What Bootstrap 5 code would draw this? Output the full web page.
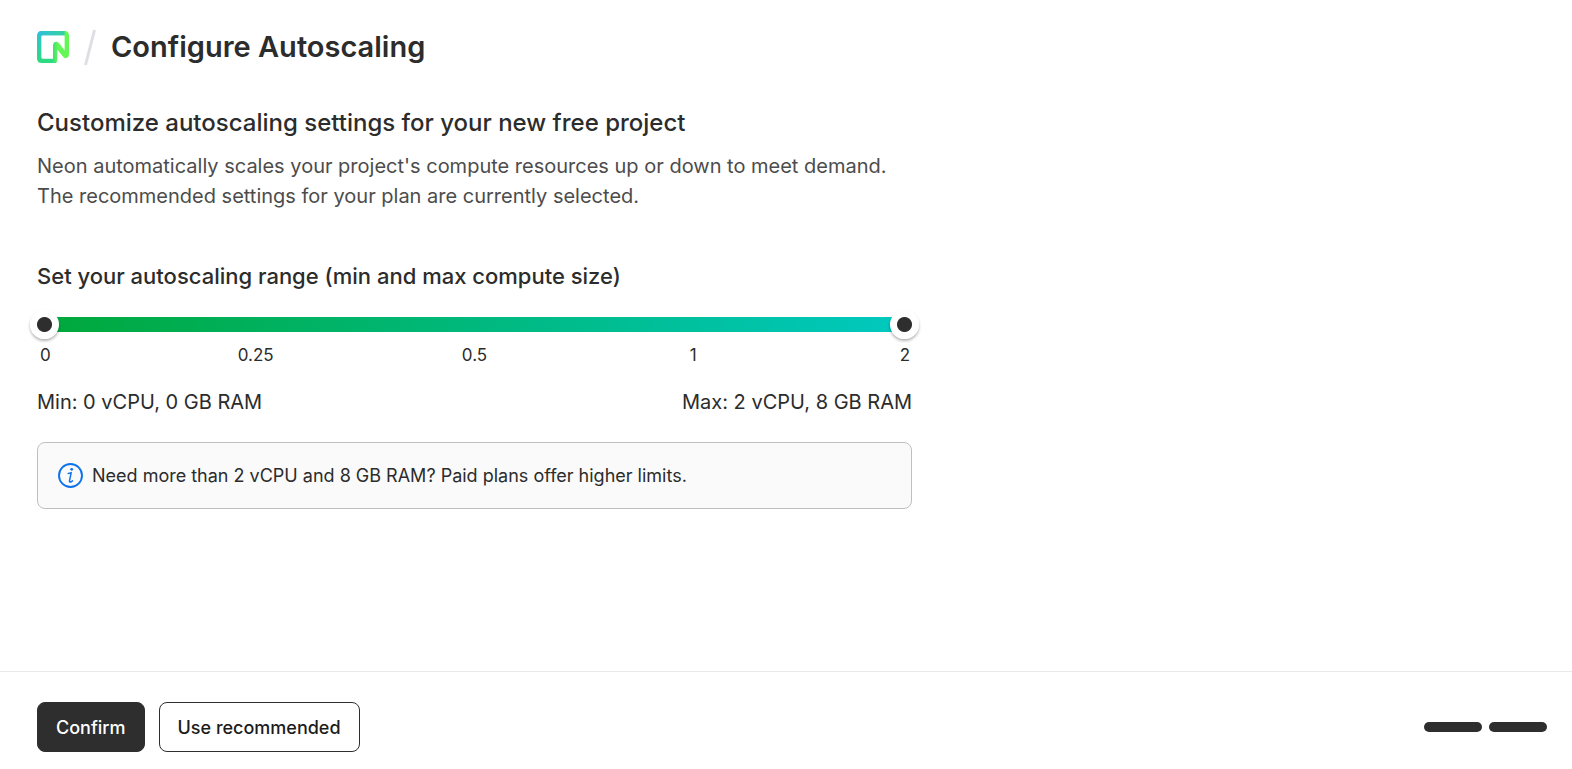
<!DOCTYPE html>
<html lang="en">
<head>
<meta charset="utf-8">
<meta name="viewport" content="width=device-width, initial-scale=1">
<title>Configure Autoscaling</title>
<link href="https://cdn.jsdelivr.net/npm/bootstrap@5.3.0/dist/css/bootstrap.min.css" rel="stylesheet">
<style>
  body { font-family: Inter, "Liberation Sans", sans-serif; color: #2c2c2c; background: #fff; }
  .page-head { padding: 27px 37px 0; gap: 15px; }
  .page-title { font-size: 29px; line-height: 39px; font-weight: 600; }
  .page-body { padding: 39px 37px 24px; }
  .settings { max-width: 875px; }
  .intro-title { font-size: 24px; line-height: 36px; font-weight: 500; }
  .intro-text { font-size: 20px; line-height: 30px; color: #4c4c4c; margin: 10px 0 48px; }
  .range-title { font-size: 22px; line-height: 34px; font-weight: 500; margin-bottom: 16px; }
  .dual-range { height: 31px; }
  .dual-range::before { content: ""; position: absolute; top: 8px; left: 0; right: 0; height: 15px;
    background: linear-gradient(90deg, #00a83a, #00c9c0); }
  .dual-range input { -webkit-appearance: none; appearance: none; position: absolute; top: 0; left: -7px;
    width: calc(100% + 14px); height: 31px; margin: 0; background: none; pointer-events: none; }
  .dual-range input::-webkit-slider-thumb { -webkit-appearance: none; pointer-events: auto; cursor: pointer;
    width: 29px; height: 29px; border: 0; border-radius: 50%;
    background: radial-gradient(circle, #2e2e2e 7px, #fff 8px); box-shadow: 0 2px 3px rgba(0, 0, 0, .3); }
  .ticks { font-size: 17px; line-height: 24px; margin-top: 3px; }
  .tick { width: 25%; text-align: center; }
  .tick:first-child { width: 12.5%; text-align: left; padding-left: 3px; }
  .tick:last-child { width: 12.5%; text-align: right; padding-right: 2px; }
  .limits { font-size: 20px; line-height: 30px; margin-top: 20px; }
  .note { border: 1px solid #bfbfbf; border-radius: 8px; background: #fafafa; margin-top: 25px;
    padding: 20px; gap: 9px; font-size: 18px; line-height: 25px; }
  .page-foot { border-top: 1px solid #e9e9e9; padding: 30px 25px 17px 37px; }
  .action { height: 50px; padding: 0 18px; border-radius: 8px; font-size: 18px; font-weight: 500; border: 1px solid #2e2e2e; }
  .action-main, .action-main:hover { background: #2e2e2e; color: #fff; }
  .action-alt, .action-alt:hover { background: #fff; color: #1c1c1c; }
  .step { width: 58px; height: 10px; background: #2e2e2e; }
  .steps { gap: 7px; }
  .actions { gap: 14px; }
</style>
</head>
<body class="d-flex flex-column min-vh-100">
<header class="page-head d-flex align-items-center">
  <svg width="32" height="32" viewBox="0 0 33 33" role="img" aria-label="Neon">
    <defs>
      <linearGradient id="edge" x1="0" y1="0" x2="0" y2="1"><stop offset="0" stop-color="#30c0dc"/><stop offset="1" stop-color="#2edc7c"/></linearGradient>
      <linearGradient id="top" x1="0" y1="0" x2="1" y2="0"><stop offset="0" stop-color="#30c0dc"/><stop offset="1" stop-color="#34d29c"/></linearGradient>
      <linearGradient id="stem" x1="0" y1="0" x2="1" y2="0"><stop offset="0" stop-color="#3ee06e"/><stop offset=".35" stop-color="#62f755"/></linearGradient>
    </defs>
    <path d="M5 0H29V4.500H6Q4.500 4.500 4.500 6V27Q4.500 28.500 6 28.500H20V33H5Q0 33 0 28V5Q0 0 5 0Z" fill="url(#edge)"/>
    <path d="M5 0H29V4.500H4.500L1.400 1.500Q3 0 5 0Z" fill="url(#top)"/>
    <path d="M28.500 0Q33 0 33 5V23.500Q33 28 29.500 28Q28 28 26.500 26L21 19V29Q21 33 16.500 33V15Q16.500 11 20 11Q21.500 11 23 13L28.500 20Z" fill="url(#stem)"/>
  </svg>
  <svg width="12" height="38" viewBox="0 0 12 38" aria-hidden="true"><path d="M10.500 2L1.500 37" stroke="#dedfe3" stroke-width="3"/></svg>
  <h1 class="page-title m-0">Configure Autoscaling</h1>
</header>
<main class="page-body flex-grow-1">
  <div class="settings">
    <h2 class="intro-title mb-0">Customize autoscaling settings for your new free project</h2>
    <p class="intro-text">Neon automatically scales your project's compute resources up or down to meet demand. The recommended settings for your plan are currently selected.</p>
    <h3 class="range-title" id="range-title">Set your autoscaling range (min and max compute size)</h3>
    <div class="dual-range position-relative" role="group" aria-labelledby="range-title">
      <input type="range" min="0" max="4" step="1" value="0" aria-labelledby="min-label">
      <input type="range" min="0" max="4" step="1" value="4" aria-labelledby="max-label">
    </div>
    <div class="ticks d-flex">
      <span class="tick">0</span><span class="tick">0.25</span><span class="tick">0.5</span><span class="tick">1</span><span class="tick">2</span>
    </div>
    <div class="limits d-flex justify-content-between flex-wrap">
      <span id="min-label">Min: 0 vCPU, 0 GB RAM</span>
      <span id="max-label">Max: 2 vCPU, 8 GB RAM</span>
    </div>
    <div class="note d-flex align-items-center">
      <svg class="flex-shrink-0" width="25" height="25" viewBox="0 0 25 25" fill="none" stroke="#0d72ed" aria-hidden="true">
        <circle cx="12.500" cy="12.500" r="11.500" stroke-width="1.900"/>
        <path d="M10.200 10.400Q12 10.200 13.200 9.600L11.500 17.600Q11.200 19.600 13 18.800L14.500 17.800" stroke-width="1.500" stroke-linecap="round" stroke-linejoin="round"/>
        <circle cx="13.700" cy="6.300" r="1.400" fill="#0d72ed" stroke="none"/>
      </svg>
      <span>Need more than 2 vCPU and 8 GB RAM? Paid plans offer higher limits.</span>
    </div>
  </div>
</main>
<footer class="page-foot d-flex align-items-center justify-content-between">
  <div class="actions d-flex">
    <button type="button" class="btn action action-main">Confirm</button>
    <button type="button" class="btn action action-alt">Use recommended</button>
  </div>
  <div class="steps d-flex" role="img" aria-label="Step 2 of 2">
    <span class="step rounded-pill"></span><span class="step rounded-pill"></span>
  </div>
</footer>
<script src="https://cdn.jsdelivr.net/npm/bootstrap@5.3.0/dist/js/bootstrap.bundle.min.js"></script>
</body>
</html>
